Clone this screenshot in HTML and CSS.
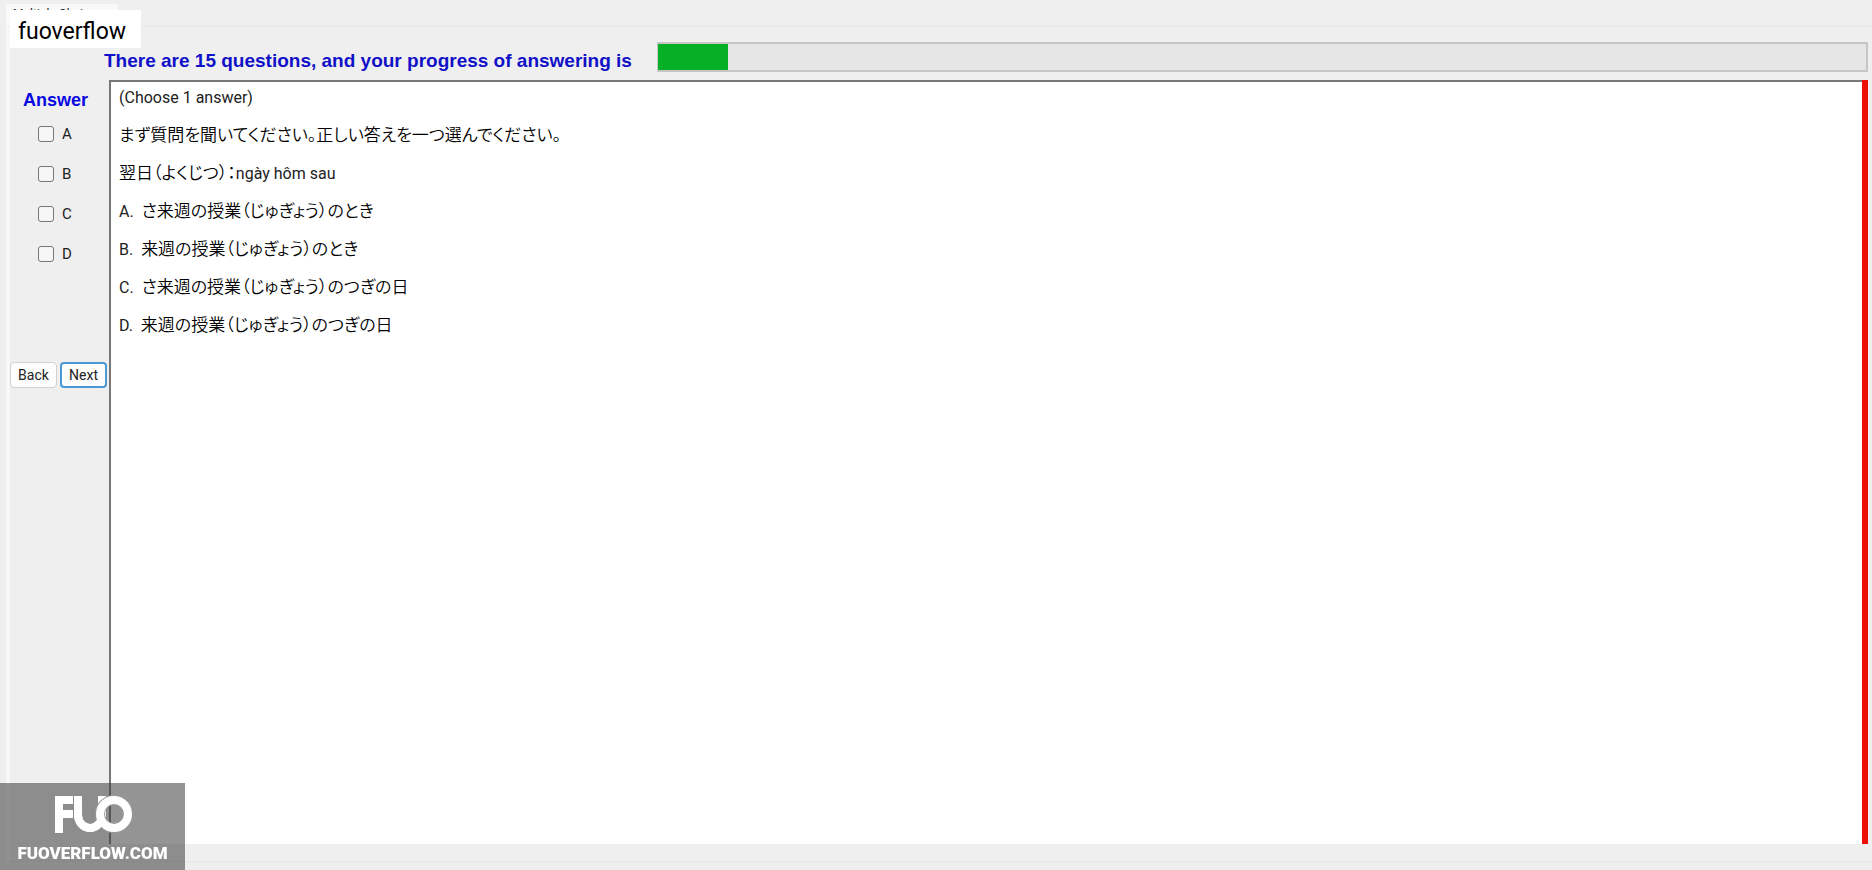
FILE: index.html
```html
<!DOCTYPE html>
<html lang="en">
<head>
  <meta charset="UTF-8">
  <title>Multiple Choices</title>
  <meta name="viewport" content="width=device-width, initial-scale=1.0">
  <link rel="stylesheet" href="styles.css">
</head>
<body>

  <div class="tabs">
    <button type="button" class="tab">Multiple Choices</button>
  </div>
  <div class="user-label">fuoverflow</div>

  <main class="page">
    <div class="progress-row">
      <label class="progress-text" for="progress">There are 15 questions, and your progress of answering is</label>
      <progress id="progress" class="progress" value="70" max="1208"></progress>
    </div>

    <div class="exam">
      <form class="answers">
        <h2>Answer</h2>
        <label class="choice"><input type="checkbox" name="answer" value="A">A</label>
        <label class="choice"><input type="checkbox" name="answer" value="B">B</label>
        <label class="choice"><input type="checkbox" name="answer" value="C">C</label>
        <label class="choice"><input type="checkbox" name="answer" value="D">D</label>
        <div class="buttons">
          <button type="button">Back</button>
          <button type="button" class="next">Next</button>
        </div>
      </form>

      <section class="question">
        <p>(Choose 1 answer)</p>
        <p><span lang="ja">まず質問を聞いてください。正しい答えを一つ選んでください。</span></p>
        <p><span lang="ja">翌日（よくじつ）：</span>ngày hôm sau</p>
        <p>A.  <span lang="ja">さ来週の授業（じゅぎょう）のとき</span></p>
        <p>B.  <span lang="ja">来週の授業（じゅぎょう）のとき</span></p>
        <p>C.  <span lang="ja">さ来週の授業（じゅぎょう）のつぎの日</span></p>
        <p>D.  <span lang="ja">来週の授業（じゅぎょう）のつぎの日</span></p>
      </section>
    </div>
  </main>

  <div class="watermark">
    <svg class="logo" viewBox="0 0 80 38" width="80" height="38" fill="none" stroke="#fff" stroke-width="8">
      <path d="M6 38V5H20M6 19H20"/>
      <path d="M25 1V20A12 13 0 0 0 49 20V1"/>
      <circle cx="61" cy="19" r="14" stroke="#999" stroke-width="10"/>
      <path d="M25 20A12 13 0 0 0 47 27"/>
      <circle cx="61" cy="19" r="14"/>
    </svg>
    <span>FUOVERFLOW.COM</span>
  </div>

</body>
</html>
```
FILE: styles.css
```css
body {
  margin: 0;
  min-height: 100vh;
  box-sizing: border-box;
  padding: 4px 0 8px 6px;
  display: flex;
  flex-direction: column;
  background: #efefef;
  color: #222;
  font-family: Roboto, "Noto Sans CJK JP", sans-serif;
  font-size: 16px;
}

.tabs {
  height: 22px;
  overflow: hidden;
}

.tab {
  width: 112px;
  height: 24px;
  padding: 4px 0 0 7px;
  border: 0;
  background: #f9f9f9;
  color: #222;
  font: 12px/13px Roboto, sans-serif;
  text-align: left;
  display: flex;
  align-items: flex-start;
}

.user-label {
  position: absolute;
  top: 10px;
  left: 10px;
  padding: 5px 15px 0 8px;
  background: #fff;
  color: #000;
  font-size: 23px;
  line-height: 33px;
}

.page {
  flex: 1;
  display: flex;
  flex-direction: column;
  border: solid #e6e6e6;
  border-width: 1px 0;
  border-left: 4px solid #f8f8f8;
  padding: 15px 4px 17px 0;
}

.progress-row {
  display: flex;
  gap: 25px;
  padding-left: 94px;
  margin-bottom: 8px;
}

.progress-text {
  padding-top: 8px;
  color: #1010c8;
  font: bold 19px/22px "Liberation Sans", sans-serif;
  white-space: nowrap;
}

.progress {
  flex: 1;
  height: 30px;
  box-sizing: border-box;
  border: 2px solid #c6c6c6;
  border-left-width: 1px;
  background: #e6e6e6;
  appearance: none;
}

.progress::-webkit-progress-bar {
  background: #e6e6e6;
}

.progress::-webkit-progress-value {
  background: #06b025;
}

.exam {
  flex: 1;
  display: flex;
  border-right: 6px solid #ee1005;
}

.answers {
  width: 99px;
}

.answers h2 {
  margin: 0 0 12px;
  padding: 8px 0 0 13px;
  color: #0808e0;
  font: bold 18px/24px "Liberation Sans", sans-serif;
}

.choice {
  display: flex;
  align-items: center;
  gap: 8px;
  height: 20px;
  margin: 0 0 20px 28px;
  font-size: 15px;
}

.choice input {
  appearance: none;
  width: 16px;
  height: 16px;
  margin: 0;
  border: 1px solid #777;
  border-radius: 3px;
  background: #f6f6f6;
}

.choice input:checked {
  background: #4a98d4;
}

.buttons {
  display: flex;
  gap: 3px;
  margin-top: 98px;
}

.buttons button {
  width: 47px;
  height: 26px;
  padding: 0;
  border: 1px solid #d0d0d0;
  border-radius: 4px;
  background: #fdfdfd;
  color: #222;
  font: 14px Roboto, sans-serif;
}

.buttons .next {
  border: 2px solid #4a98d4;
}

.question {
  flex: 1;
  border-top: 2px solid #777;
  border-left: 2px solid #777;
  background: #fff;
  padding: 4px 8px;
}

.question p {
  margin: 0 0 14px;
  line-height: 24px;
  white-space: pre;
}

.question [lang="ja"] {
  color: #000;
  font-family: "Noto Sans CJK JP", sans-serif;
  font-size: 17px;
  font-weight: 350;
  line-height: 1;
  font-feature-settings: "palt";
}

.watermark {
  position: fixed;
  left: 0;
  bottom: 0;
  width: 185px;
  height: 87px;
  box-sizing: border-box;
  padding-top: 12px;
  display: flex;
  flex-direction: column;
  align-items: center;
  gap: 8px;
  background: rgba(60, 60, 60, 0.55);
  color: #fff;
  font: 900 17px/24px Roboto, sans-serif;
}
```
